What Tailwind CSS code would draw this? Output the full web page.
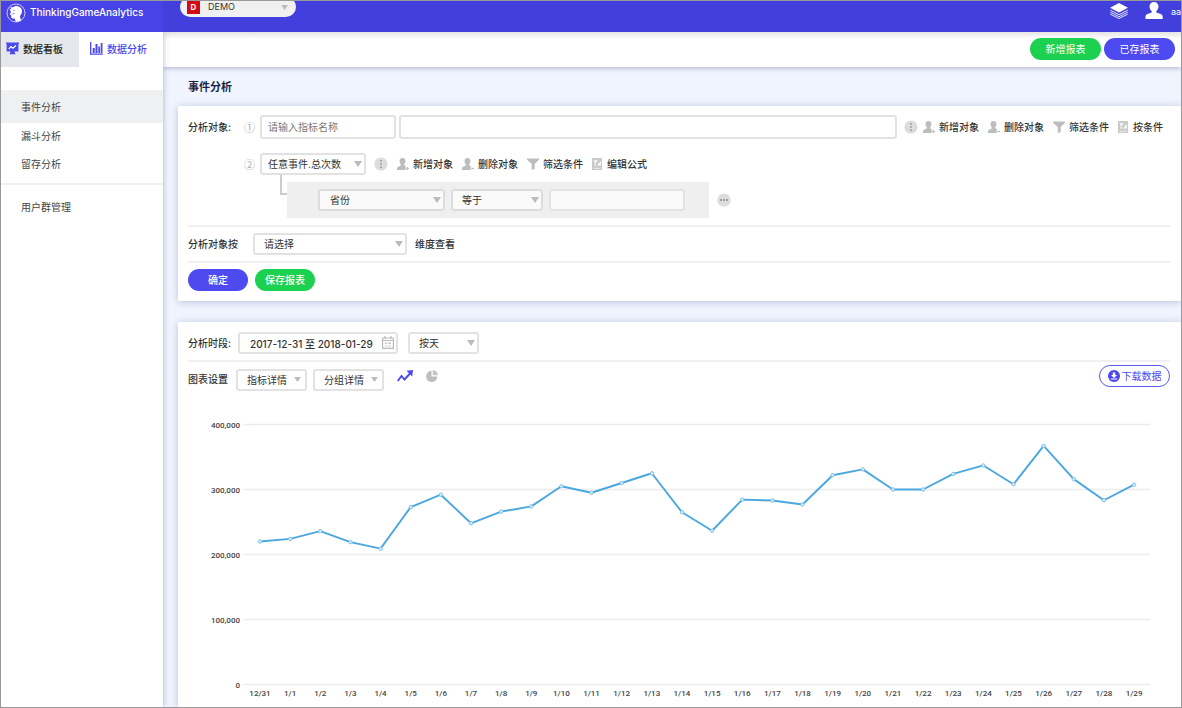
<!DOCTYPE html>
<html lang="zh-CN">
<head>
<meta charset="utf-8">
<meta name="viewport" content="width=device-width, initial-scale=1">
<title>ThinkingGameAnalytics</title>
<script src="https://cdn.jsdelivr.net/npm/@tailwindcss/browser@4"></script>
</head>
<body class="[font-family:Inter,'Noto_Sans_CJK_SC',sans-serif] text-[10px] leading-4 text-[#333]">
<svg class="hidden" aria-hidden="true">
  <symbol id="caret" viewBox="0 0 8 6"><path d="M0 0h8L4 6z" fill="#bbb"/></symbol>
  <symbol id="dots-v" viewBox="0 0 14 14"><circle cx="7" cy="7" r="6.6" fill="#dcdcdc"/><path d="M6.3 3h1.4v1.6H6.3zM6.3 6.2h1.4v1.6H6.3zM6.3 9.4h1.4V11H6.3z" fill="#888"/></symbol>
  <symbol id="dots-h" viewBox="0 0 14 14"><circle cx="7" cy="7" r="6.6" fill="#dcdcdc"/><path d="M3 6.2h2v1.5H3zM6 6.2h2v1.5H6zM9 6.2h2v1.5H9z" fill="#888"/></symbol>
  <symbol id="person-add" viewBox="0 0 12 12"><path d="M5.500 0C7.300 0 8.500 1.300 8.500 3c0 1.400-.6 2.300-1.200 3v1.200l1.400.8v4H0v-1.600c0-.9.500-1.400 1.300-1.700L3.700 7.500V6C3 5.300 2.500 4.400 2.500 3 2.500 1.300 3.700 0 5.500 0z" fill="#bdbdbd"/><path d="M10.500 9v3M9.300 10.500H12" stroke="#bdbdbd" stroke-width="1.200"/></symbol>
  <symbol id="person-del" viewBox="0 0 12 12"><path d="M5.500 0C7.300 0 8.500 1.300 8.500 3c0 1.400-.6 2.300-1.200 3v1.200l1.400.8v4H0v-1.600c0-.9.500-1.400 1.300-1.700L3.700 7.500V6C3 5.300 2.500 4.400 2.500 3 2.500 1.300 3.700 0 5.500 0z" fill="#bdbdbd"/><path d="M9.300 10.500H12" stroke="#bdbdbd" stroke-width="1.300"/></symbol>
  <symbol id="funnel" viewBox="0 0 12 12"><path d="M0 .5h12v1.300L7.700 6v5L4.700 12V6L0 1.800z" fill="#bdbdbd"/></symbol>
  <symbol id="doc" viewBox="0 0 10 12"><path d="M0 0h10v12H0z" fill="#c9c9c9"/><path d="M1.500 10.300h7" stroke="#eee"/><path d="M1.500 2h4v1.300L3.800 5v3H2.500V5z" fill="#fff" fill-opacity=".75"/><path d="M5 7.500 8.800 3v4.500z" fill="#fff"/></symbol>
</svg>

<div class="flex min-h-screen flex-col overflow-hidden border border-[#999] bg-[#f0f4ff]">
  <header class="relative z-10 flex h-[31px] items-start overflow-hidden bg-[#4140dc] text-white">
    <div class="flex h-full w-[162px] items-start gap-1 bg-[#4743e6] pt-[2px] pl-[5px]">
      <svg class="size-5 shrink-0" viewBox="0 0 20 20" aria-hidden="true"><circle cx="10" cy="10" r="9" fill="none" stroke="#fff" stroke-opacity=".7" stroke-width="1"/><path d="M4.500 3.500 6.500 4.500C9 2 13.500 2.500 15.300 5.500c.9 1.600.9 3.300.3 4.700-.5 1.300-1.600 2-1.600 3.300L15 17.500 10 19 8.500 15.500C7 15.800 5.500 15.500 5.300 14.300L5 12l-1.300-.7L5 9 3.500 6.500 5 6z" fill="#fff"/><path d="M7 6.500 8.500 8M6.500 11l2-.5" stroke="#4743e6" stroke-width=".8"/></svg>
      <span class="text-[10px] leading-[18px] font-medium">ThinkingGameAnalytics</span>
    </div>
    <div class="-mt-1 ml-[17px] flex h-5 w-[116px] items-center gap-2 rounded-full bg-[#f0f0f0] pr-2 pl-[7px]">
      <span class="flex h-[13px] w-[13px] items-center justify-center bg-[#d40a10] text-[8px] leading-none font-bold">D</span>
      <select aria-label="项目" class="min-w-0 flex-1 appearance-none text-[9px] leading-4 text-[#333] outline-none"><option>DEMO</option></select>
      <svg class="h-[5px] w-[7px]"><use href="#caret"/></svg>
    </div>
    <div class="ml-auto flex items-start gap-[17px] pt-[1px]">
      <a href="#" aria-label="图层"><svg class="mt-[1px] h-4 w-[18px]" viewBox="0 0 18 16"><path d="M9 0l9 4.700-9 4.700-9-4.700z" fill="#fff"/><path d="M.3 7.200 9 11.700l8.700-4.500M.3 9.200 9 13.700l8.700-4.500M.3 11.200 9 15.500l8.700-4.300" fill="none" stroke="#fff" stroke-opacity=".85" stroke-width="1"/></svg></a>
      <a href="#" class="flex gap-2"><svg class="h-[17px] w-[18px]" viewBox="0 0 18 17" aria-hidden="true"><path d="M9 0c2.700 0 4.500 2 4.500 4.600 0 1.900-.9 3.500-2.200 4.600v1.300l4.400 1.500c1.500.5 2 1.500 2 2.800V17H.5v-2.200c0-1.300.6-2.300 2-2.800l4.200-1.500V9.200C5.400 8.100 4.500 6.500 4.500 4.600 4.500 2 6.300 0 9 0z" fill="#fff"/></svg><span class="pt-[2px] text-[9px] leading-4">aa</span></a>
    </div>
  </header>

  <div class="flex flex-1">
    <nav class="z-[5] w-[162px] shrink-0 bg-white shadow-[0_0_6px_rgba(40,50,100,0.35)]">
      <div class="flex h-[35px]">
        <a href="#" class="flex w-[78px] items-center gap-1 bg-[#e4e8ec] pb-[2px] pl-[5px] font-medium text-[#222]">
          <svg class="size-[13px]" viewBox="0 0 13 13" aria-hidden="true"><path d="M0 .5h13v1.300h-.6V9.500H8.300l1.200 2.700H3.500l1.200-2.700H.6V1.800H0z" fill="#4a48ee"/><path d="M2.800 7 5 4.500l2 1.700 3-2.700" fill="none" stroke="#fff" stroke-width="1.200"/></svg>数据看板</a>
        <a href="#" aria-current="page" class="flex items-center gap-1 pb-[2px] pl-[11px] font-medium text-[#4a48ee]">
          <svg class="size-[13px]" viewBox="0 0 13 13" aria-hidden="true"><path d="M.7 0v12.200H13" fill="none" stroke="#4a48ee" stroke-width="1.300"/><path d="M2.700 6h2v5h-2zM5.500 2h2v9h-2zM8.300 4.500h1.700V11H8.300zM10.700 1h1.800v10h-1.800z" fill="#4a48ee"/></svg>数据分析</a>
      </div>
      <div class="mt-[23px] flex flex-col text-[#444]">
        <a href="#" aria-current="page" class="bg-[#eff0f2] pt-[9px] pb-[7px] pl-5 leading-[17px]">事件分析</a>
        <a href="#" class="pt-[5px] pl-5 leading-[17px]">漏斗分析</a>
        <a href="#" class="pt-[11px] pb-[10px] pl-5 leading-[17px]">留存分析</a>
        <a href="#" class="border-t-2 border-[#f0f0f2] pt-[14px] pl-5 leading-[17px]">用户群管理</a>
      </div>
    </nav>

    <main class="flex min-w-0 flex-1 flex-col">
      <div class="flex h-[35px] shrink-0 items-center justify-end gap-[3px] bg-linear-to-b from-[#e4e4e4] via-white via-20% to-white pr-[6px] pb-[2px] shadow-[0_1px_5px_rgba(40,50,90,0.35)]">
        <button class="h-[22px] w-[71px] rounded-full bg-[#1bd14f] text-white">新增报表</button>
        <button class="h-[22px] w-[71px] rounded-full bg-[#4d4af0] text-white">已存报表</button>
      </div>
      <h1 class="pt-3 pb-[11px] pl-[25px] text-[11px] leading-4 font-bold text-[#1c1f45]">事件分析</h1>

      <section class="ml-[15px] bg-white pt-[9px] pr-[11px] pb-[10px] pl-[10px] shadow-[0_1px_7px_rgba(60,70,130,0.3)]">
        <div class="flex items-center">
          <span class="w-14 shrink-0 font-medium">分析对象:</span>
          <span class="w-4 shrink-0 text-[11px] [font-family:'Noto_Sans_CJK_SC',sans-serif] text-[#aaa]">①</span>
          <input aria-label="指标名称" placeholder="请输入指标名称" class="h-6 w-[136px] shrink-0 rounded-[3px] border-2 border-[#e2e2e2] px-[6px] outline-none placeholder:text-[#777]">
          <input aria-label="公式" class="ml-[3px] h-6 min-w-0 flex-1 rounded-[3px] border-2 border-[#e2e2e2] px-2 outline-none">
          <div class="ml-[7px] flex shrink-0 items-center gap-[9px] pr-[7px]">
            <button aria-label="更多" class="-mr-1"><svg class="size-[14px]"><use href="#dots-v"/></svg></button>
            <button class="flex items-center gap-1 font-medium"><svg class="size-3"><use href="#person-add"/></svg>新增对象</button>
            <button class="flex items-center gap-1 font-medium"><svg class="size-3"><use href="#person-del"/></svg>删除对象</button>
            <button class="flex items-center gap-1 font-medium"><svg class="size-3"><use href="#funnel"/></svg>筛选条件</button>
            <button class="flex items-center gap-[5px] font-medium"><svg class="h-3 w-[10px]"><use href="#doc"/></svg>按条件</button>
          </div>
        </div>
        <div class="mt-[14px] flex items-center pl-14">
          <span class="w-4 shrink-0 text-[11px] [font-family:'Noto_Sans_CJK_SC',sans-serif] text-[#aaa]">②</span>
          <div class="relative w-[106px]"><select aria-label="事件指标" class="h-[22px] w-full appearance-none rounded-[3px] border-2 border-[#e2e2e2] bg-white px-[6px] outline-none"><option>任意事件.总次数</option></select><svg class="pointer-events-none absolute top-2 right-1 h-[6px] w-2"><use href="#caret"/></svg></div>
          <div class="ml-2 flex items-center gap-[9px]">
            <button aria-label="更多"><svg class="size-[14px]"><use href="#dots-v"/></svg></button>
            <button class="flex items-center gap-1 font-medium"><svg class="size-3"><use href="#person-add"/></svg>新增对象</button>
            <button class="flex items-center gap-1 font-medium"><svg class="size-3"><use href="#person-del"/></svg>删除对象</button>
            <button class="flex items-center gap-1 font-medium"><svg class="size-3"><use href="#funnel"/></svg>筛选条件</button>
            <button class="flex items-center gap-[5px] font-medium"><svg class="h-3 w-[10px]"><use href="#doc"/></svg>编辑公式</button>
          </div>
        </div>
        <div class="flex pb-[7px] pl-[92px]">
          <div class="h-5 w-[7px] border-b-2 border-l-2 border-[#ccc]"></div>
          <div class="mt-[7px] flex h-9 w-[422px] items-center gap-[6px] bg-[#efefef] pl-[31px]">
            <div class="relative w-[127px]"><select aria-label="属性" class="h-[22px] w-full appearance-none rounded-[3px] border-2 border-[#dcdcdc] bg-[#fafafa] px-[10px] outline-none"><option>省份</option></select><svg class="pointer-events-none absolute top-2 right-1 h-[6px] w-2"><use href="#caret"/></svg></div>
            <div class="relative w-[92px]"><select aria-label="条件" class="h-[22px] w-full appearance-none rounded-[3px] border-2 border-[#dcdcdc] bg-[#fafafa] px-[9px] outline-none"><option>等于</option></select><svg class="pointer-events-none absolute top-2 right-1 h-[6px] w-2"><use href="#caret"/></svg></div>
            <input aria-label="条件值" class="h-[22px] w-[136px] rounded-[3px] border-2 border-[#e2e2e2] bg-[#fafafa] px-2 outline-none">
          </div>
          <button aria-label="更多条件" class="mt-[7px] ml-2"><svg class="size-[14px]"><use href="#dots-h"/></svg></button>
        </div>
        <div class="flex items-center border-y-2 border-[#f0f0f2] py-[6px]">
          <label for="dim" class="w-[65px] font-medium">分析对象按</label>
          <div class="relative w-[154px]"><select id="dim" class="h-[22px] w-full appearance-none rounded-[3px] border-2 border-[#e2e2e2] bg-white px-[9px] outline-none"><option>请选择</option></select><svg class="pointer-events-none absolute top-2 right-1 h-[6px] w-2"><use href="#caret"/></svg></div>
          <span class="ml-2 font-medium">维度查看</span>
        </div>
        <div class="flex gap-[7px] pt-[6px]">
          <button class="h-[22px] w-[60px] rounded-full bg-[#4d4af0] font-medium text-white">确定</button>
          <button class="h-[22px] w-[60px] rounded-full bg-[#1bd14f] font-medium text-white">保存报表</button>
        </div>
      </section>

      <section class="mt-[21px] ml-[15px] flex-1 bg-white pt-[10px] shadow-[0_1px_7px_rgba(60,70,130,0.3)]">
        <div class="mr-[11px] ml-[10px] flex items-center border-b-2 border-[#f0f0f2] pb-[6px]">
          <label for="range" class="w-[50px] font-medium">分析时段:</label>
          <div class="relative w-40"><input id="range" value="2017-12-31 至 2018-01-29" class="h-[22px] w-full rounded-[3px] border-2 border-[#e2e2e2] pl-[10px] font-medium outline-none">
            <svg class="pointer-events-none absolute top-1 right-1 h-[13px] w-3" viewBox="0 0 12 13" aria-hidden="true"><path d="M.6 2h10.800v10.400H.6zM.6 4.500h10.800M3 0v3M9 0v3" fill="none" stroke="#bbb" stroke-width="1.200"/><path d="M3 6.500h2v1.500H3zM6 6.500h3v1.500H6zM3 9.500h2v1H3zM6 9.500h3v1H6z" fill="#c8c8c8"/></svg></div>
          <div class="relative ml-[10px] w-[71px]"><select aria-label="时间粒度" class="h-[22px] w-full appearance-none rounded-[3px] border-2 border-[#e2e2e2] bg-white px-[9px] outline-none"><option>按天</option></select><svg class="pointer-events-none absolute top-2 right-1 h-[6px] w-2"><use href="#caret"/></svg></div>
        </div>
        <div class="mr-[11px] ml-[10px] flex items-start pt-[3px]">
          <span class="mt-[6px] w-12 font-medium">图表设置</span>
          <div class="relative mt-1 w-[71px]"><select aria-label="指标" class="h-[22px] w-full appearance-none rounded-[3px] border-2 border-[#e2e2e2] bg-white px-[9px] outline-none"><option>指标详情</option></select><svg class="pointer-events-none absolute top-2 right-[6px] h-[5px] w-[7px]"><use href="#caret"/></svg></div>
          <div class="relative mt-1 ml-[6px] w-[71px]"><select aria-label="分组" class="h-[22px] w-full appearance-none rounded-[3px] border-2 border-[#e2e2e2] bg-white px-[9px] outline-none"><option>分组详情</option></select><svg class="pointer-events-none absolute top-2 right-[6px] h-[5px] w-[7px]"><use href="#caret"/></svg></div>
          <button aria-label="折线图" class="mt-[5px] ml-[13px]"><svg class="h-3 w-4" viewBox="0 0 16 12"><path d="M.8 11 4.500 6l3 3.500L13 3.500" fill="none" stroke="#4a48ee" stroke-width="1.900"/><path d="M9.500.8 16 0l-.8 6.500z" fill="#4a48ee"/></svg></button>
          <button aria-label="饼图" class="mt-[5px] ml-[13px]"><svg class="size-3" viewBox="0 0 12 12"><path d="M5.500.8V6.500h5.800A5.600 5.600 0 1 1 5.500.8z" fill="#bdbdbd"/><path d="M6.700 0A5.300 5.300 0 0 1 12 5.300H6.700z" fill="#c6c6c6"/></svg></button>
          <button class="ml-auto flex h-[22px] w-[71px] items-center justify-center gap-[2px] rounded-full border border-[#5a58ee] text-[#4a48ee]"><svg class="size-3" viewBox="0 0 12 12" aria-hidden="true"><circle cx="6" cy="6" r="6" fill="#4a48ee"/><path d="M4.800 2.500h2.400V5H9L6 8 3 5h1.800z" fill="#fff"/><path d="M2.800 9h6.400" stroke="#fff"/></svg>下载数据</button>
        </div>
        <svg id="chart" class="mt-[14px] block h-auto w-full" viewBox="0 0 1003 301" role="img" aria-label="任意事件总次数趋势"></svg>
      </section>
    </main>
  </div>
</div>

<script>
  const counts = [220, 224, 236, 219, 209, 273, 292, 248, 266, 274, 305, 295, 310, 325, 265, 236.5, 284.5, 283, 277, 322, 331, 300, 300, 324, 337, 308, 367, 316, 283.5, 307.5];
  const parts = [];
  const baseY = 279.5;
  const y = (v) => baseY - v * 0.65;
  const x = (i) => 82 + i * 30.14;
  for (let k = 0; k <= 400; k += 100) {
    const label = k === 0 ? '0' : k + ',000';
    parts.push(`<path d="M66 ${y(k)}H972" stroke="#ececec" stroke-width="1.5"/>`);
    parts.push(`<text x="62" y="${y(k) + 3}" text-anchor="end">${label}</text>`);
  }
  parts.push(`<polyline points="${counts.map((v, i) => x(i) + ',' + y(v)).join(' ')}" fill="none" stroke="#4ba7e0" stroke-width="1.9" stroke-linejoin="round"/>`);
  counts.forEach((v, i) => {
    parts.push(`<circle cx="${x(i)}" cy="${y(v)}" r="1.7" fill="#d8eefb" stroke="#7cc0ea" stroke-width="1"/>`);
    parts.push(`<text x="${x(i)}" y="291" text-anchor="middle">${i === 0 ? '12/31' : '1/' + i}</text>`);
  });
  document.getElementById('chart').innerHTML = `<g font-size="8" font-family="Roboto, sans-serif" font-weight="500" fill="#444">${parts.join('')}</g>`;
</script>
</body>
</html>
